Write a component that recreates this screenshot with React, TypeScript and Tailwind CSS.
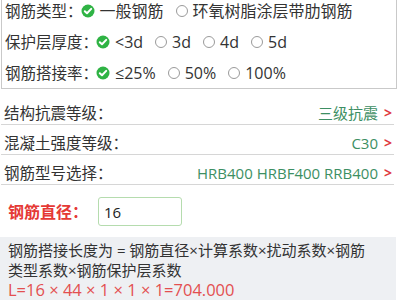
import React from "react";

const Check = () => (
  <svg width="14" height="14" viewBox="0 0 14 14" className="shrink-0">
    <circle cx="7" cy="7" r="6.5" fill="#2fb344" />
    <path d="M3.8 7.2 L6 9.3 L10.2 4.9" stroke="#fff" strokeWidth="2" fill="none" strokeLinecap="round" strokeLinejoin="round" />
  </svg>
);

const Radio = () => (
  <span className="inline-block w-[12px] h-[12px] rounded-full border border-[#9a9a9a] shrink-0" />
);

const Opt = ({ on, label, first }: { on?: boolean; label: string; first?: boolean }) => (
  <span className={`flex items-center ${first ? "-ml-[2px]" : "ml-[12px]"}`}>
    {on ? <Check /> : <Radio />}
    <span className="ml-[5px]">{label}</span>
  </span>
);

const ListRow = ({ label, value }: { label: string; value: string }) => (
  <div className="h-[30px] flex items-end pb-[1px] border-b border-[#d6d6d6]">
    <span className="pl-[3px] text-[15.5px] text-[#333]">{label}</span>
    <span className="ml-auto text-[#3d8f63]">{value}</span>
    <span className="ml-[6px] mr-[2px] text-[#e0393e] font-bold text-[14px]">&gt;</span>
  </div>
);

export default function App() {
  return (
    <div
      className="w-[400px] h-[300px] overflow-hidden bg-white text-[15px] leading-[20px] text-[#333]"
      style={{ fontFamily: '"Open Sans", "Noto Sans CJK SC", sans-serif' }}
    >
      <div className="-mt-[6px] ml-[1px] w-[396px] border border-[#c9c9c9] pl-[3px] text-[16px]">
        <div className="h-[31px] flex items-center">
          <span className="text-[15.5px]">钢筋类型：</span>
          <Opt on first label="一般钢筋" />
          <Opt label="环氧树脂涂层带肋钢筋" />
        </div>
        <div className="h-[31px] flex items-center">
          <span className="text-[15.5px]">保护层厚度：</span>
          <Opt on first label="<3d" />
          <Opt label="3d" />
          <Opt label="4d" />
          <Opt label="5d" />
        </div>
        <div className="h-[31px] flex items-center">
          <span className="text-[15.5px]">钢筋搭接率：</span>
          <Opt on first label="≤25%" />
          <Opt label="50%" />
          <Opt label="100%" />
        </div>
      </div>

      <div className="mt-[6px] ml-[1px] w-[393px]">
        <ListRow label="结构抗震等级：" value="三级抗震" />
        <ListRow label="混凝土强度等级：" value="C30" />
        <ListRow label="钢筋型号选择：" value="HRB400 HRBF400 RRB400" />
      </div>

      <div className="mt-[12px] flex items-center h-[29px]">
        <span className="pl-[8px] w-[98px] text-[16px] font-bold text-[#e53935]">钢筋直径：</span>
        <div className="w-[84px] h-[29px] border border-[#b5dcae] rounded-[3px] flex items-center pl-[5px] text-[15px] text-[#222]">
          16
        </div>
      </div>

      <div className="mt-[11px] w-[396px] h-[80px] bg-[#eef0f3] pl-[8px] pt-[3px] text-[#333]">
        <div>钢筋搭接长度为 = 钢筋直径×计算系数×扰动系数×钢筋</div>
        <div>类型系数×钢筋保护层系数</div>
        <div className="text-[16.5px] text-[#e34f50]">L=16 × 44 × 1 × 1 × 1=704.000</div>
      </div>
    </div>
  );
}
